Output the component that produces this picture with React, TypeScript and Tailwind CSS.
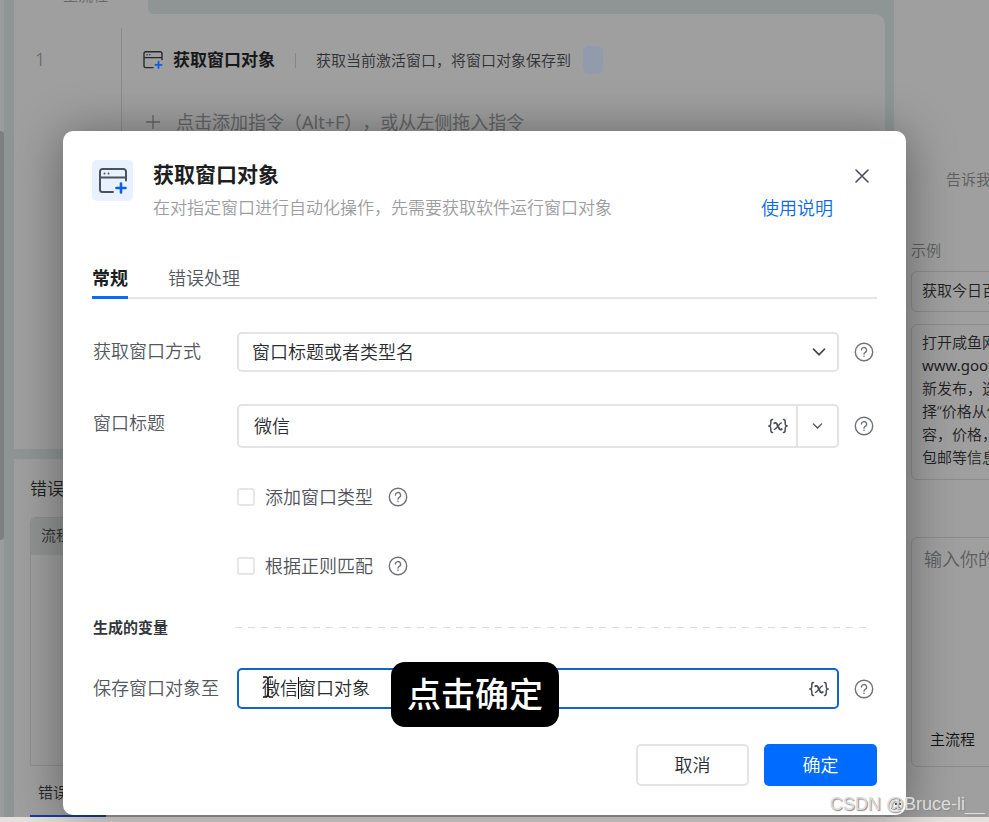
import React, { useState } from 'react';

const variableList = ['窗口标题或者类型名', '当前激活窗口'];

// Window outline with a blue plus in the lower right corner
function WindowAddIcon({ className }: { className?: string }) {
  return (
    <svg viewBox="0 0 28 26" fill="none" className={className} aria-hidden="true">
      <path
        d="M14 24H3.5A2.5 2.5 0 0 1 1 21.5v-18A2.5 2.5 0 0 1 3.500 1h21A2.500 2.500 0 0 1 27 3.500V12.500M1 9.500h26"
        stroke="currentColor"
        strokeWidth="2"
        strokeLinecap="round"
      />
      <circle cx="5.500" cy="5.500" r="1" fill="currentColor" />
      <circle cx="9.500" cy="5.500" r="1" fill="currentColor" />
      <path d="M22 15.500v9M17.500 20h9" stroke="#0a5fe6" strokeWidth="2.600" strokeLinecap="round" />
    </svg>
  );
}

function HelpIcon() {
  return (
    <button type="button" aria-label="帮助" className="shrink-0 cursor-pointer">
      <svg viewBox="0 0 20 20" fill="none" stroke="#6f7176" className="h-5 w-5">
        <circle cx="10" cy="10" r="8.700" strokeWidth="1.400" />
        <path
          d="M7.400 8.100a2.600 2.600 0 1 1 3.900 2.250c-.9.500-1.300.9-1.300 1.850"
          strokeWidth="1.300"
          strokeLinecap="round"
        />
        <circle cx="10" cy="14.300" r="0.800" fill="#6f7176" stroke="none" />
      </svg>
    </button>
  );
}

function ChevronIcon({ className }: { className?: string }) {
  return (
    <svg viewBox="0 0 14 8" fill="none" className={className} aria-hidden="true">
      <path d="M1.500 1.200 7 6.700l5.500-5.500" stroke="#4a4c50" strokeWidth="1.700" strokeLinecap="round" />
    </svg>
  );
}

function VariableButton() {
  return (
    <button type="button" aria-label="选择变量" className="shrink-0 cursor-pointer">
      <svg viewBox="0 0 20 16" fill="none" stroke="#4a4f5a" strokeLinecap="round" className="h-4 w-5">
        <path
          d="M4.500 1.500C2.800 1.500 2.800 2.500 2.800 4v1.800C2.800 7 2.300 7.700 1.200 8c1.100.3 1.600 1 1.600 2.200V12c0 1.500 0 2.500 1.700 2.500M15.500 1.500c1.700 0 1.700 1 1.700 2.500v1.800c0 1.200.5 1.900 1.600 2.200-1.100.3-1.600 1-1.600 2.200V12c0 1.500 0 2.500-1.700 2.500"
          strokeWidth="1.500"
        />
        <path d="M6.300 5.200c1.500-.8 2.300-.2 2.900 1.300l1.600 3.400c.6 1.500 1.500 2 2.900 1.200" strokeWidth="1.900" />
        <path d="M13.500 4.900C11.500 5 8.500 11.300 6.300 11.300" strokeWidth="1.300" />
      </svg>
    </button>
  );
}

function CheckRow({ id, label }: { id: string; label: string }) {
  return (
    <div className="flex h-7 items-center pl-[145px]">
      <input
        id={id}
        type="checkbox"
        className="h-[18px] w-[18px] appearance-none rounded-[3px] border-2 border-[#e6e6e8] bg-white checked:bg-[#0a6cff]"
      />
      <label htmlFor={id} className="mr-[15px] ml-[10px] text-[18px] leading-7 text-[#505359]">
        {label}
      </label>
      <HelpIcon />
    </div>
  );
}

function Workspace() {
  return (
    <div className="flex min-w-0 flex-1 flex-col">
      {/* Flow editor */}
      <section className="flex h-[449px] flex-col">
        <div className="flex h-[14px] overflow-hidden bg-[#9f9f9f]">
          <div className="w-[134px] shrink-0 pl-[49px] text-[15px] text-[#65676a]">
            <p className="-mt-[14px] leading-[18px]">主流程</p>
          </div>
          <div className="flex-1 rounded-bl-[6px] bg-[#8f9595]" />
        </div>
        <div className="flex flex-1 rounded-tr-[10px] bg-[#9f9f9f] pt-[14px]">
          <div className="w-[108px] shrink-0 border-r border-[#8b8b8c] pt-[19px] pl-[21px] text-[18px] leading-6 text-[#5f6163]">
            1
          </div>
          <div className="pl-[21px]">
            <div className="flex h-[64px] items-center whitespace-nowrap">
              <WindowAddIcon className="h-[18px] w-[20px] text-[#26292f]" />
              <h3 className="ml-[10px] text-[17px] leading-6 font-bold text-[#17181b]">获取窗口对象</h3>
              <span className="mx-5 h-[15px] w-px bg-[#858586]" />
              <p className="text-[15px] leading-6 text-[#303236]">获取当前激活窗口，将窗口对象保存到</p>
              <span className="ml-[12px] h-7 w-5 rounded-[6px] bg-[#929bab]" />
            </div>
            <div className="mt-[16px] flex h-7 items-center whitespace-nowrap text-[#636567]">
              <svg viewBox="0 0 14 14" className="mx-[3px] h-[14px] w-[14px]" stroke="currentColor" strokeWidth="1.300">
                <path d="M7 0v14M0 7h14" />
              </svg>
              <p className="ml-[13px] text-[18px] leading-7 font-normal [text-spacing-trim:space-all]">
                点击添加指令（Alt+F），或从左侧拖入指令
              </p>
            </div>
          </div>
        </div>
      </section>

      {/* Error list */}
      <section className="mt-[10px] flex flex-1 flex-col bg-[#9f9f9f] pl-4">
        <h3 className="mt-4 text-[17px] leading-7 text-[#1d1f21]">错误列表</h3>
        <div className="mt-[14px] mr-4 flex h-[249px] flex-col rounded-t-[6px] border border-[#8e8e8f]">
          <div className="flex h-[37px] shrink-0 items-center bg-[#929393] pb-1 pl-[10px] text-[15px] leading-6 text-[#2d2f31]">
            流程
          </div>
        </div>
        <div className="mt-[12px] flex flex-1 items-start">
          <button type="button" className="h-full w-[76px] border-b-2 border-[#123f96] pb-[9px] text-[15px] text-[#242628]">
            错误列表
          </button>
        </div>
      </section>
    </div>
  );
}

function AssistantPanel() {
  return (
    <aside className="flex w-[95px] shrink-0 flex-col overflow-hidden bg-[#9f9f9f] pl-[17px] text-[15px] whitespace-nowrap">
      <p className="mt-[167px] pl-[35px] leading-6 text-[#5c5e60]">告诉我你的需求</p>
      <p className="mt-[47px] leading-6 text-[#5c5e60]">示例</p>
      <div className="mt-[9px] w-[280px] rounded-[6px] border border-[#8c8c8d] px-[10px] pt-[5px] pb-[7px] leading-[27px] text-[#1f2123]">
        获取今日百
      </div>
      <div className="mt-3 w-[280px] rounded-[6px] border border-[#8c8c8d] px-[10px] pt-[6px] pb-[10px] leading-[23px] text-[#1f2123]">
        <p>打开咸鱼网</p>
        <p className="font-normal">www.goofish</p>
        <p>新发布，选</p>
        <p>择“价格从低</p>
        <p>容，价格，</p>
        <p>包邮等信息</p>
      </div>
      <div className="mt-[57px] flex h-[230px] w-[280px] flex-col justify-between rounded-[6px] border border-[#8c8c8d] px-3 pt-[7px] pb-[15px]">
        <p className="text-[18px] leading-7 text-[#5c5e60]">输入你的需求</p>
        <p className="pl-[6px] leading-6 text-[#0f1011]">主流程</p>
      </div>
    </aside>
  );
}

function WindowObjectDialog() {
  const [method, setMethod] = useState(variableList[0]);
  const [title, setTitle] = useState('微信');
  const [target, setTarget] = useState('微信窗口对象');

  return (
    <div
      role="dialog"
      aria-labelledby="dialog-title"
      className="relative w-full rounded-[10px] bg-white p-[29px] shadow-[0_4px_50px_rgba(0,0,0,0.4)]"
    >
      {/* Header */}
      <header className="flex items-start">
        <div className="flex h-[41px] w-[41px] items-center justify-center rounded-[5px] bg-[#e8f2ff]">
          <WindowAddIcon className="h-[26px] w-7 text-[#4b515e]" />
        </div>
        <div className="ml-5 flex-1">
          <div className="flex items-center justify-between">
            <h2 id="dialog-title" className="text-[21px] leading-7 font-bold text-[#1c1e22]">
              获取窗口对象
            </h2>
            <button type="button" aria-label="关闭" className="mt-1 mr-2 cursor-pointer">
              <svg viewBox="0 0 14 14" className="h-[14px] w-[14px]" stroke="#4a4f5e" strokeWidth="1.600" strokeLinecap="round">
                <path d="M1 1l12 12M13 1 1 13" />
              </svg>
            </button>
          </div>
          <div className="mt-[6px] flex items-center justify-between pr-11 leading-7">
            <p className="text-[17px] text-[#9b9da1]">在对指定窗口进行自动化操作，先需要获取软件运行窗口对象</p>
            <a href="#" className="text-[18px] text-[#0a6ae0]">
              使用说明
            </a>
          </div>
        </div>
      </header>

      {/* Tabs */}
      <div role="tablist" className="mt-[38px] flex h-[39px] gap-10 text-[18px] leading-7 shadow-[inset_0_-2px_0_#e5e6e7]">
        <button role="tab" aria-selected="true" type="button" className="border-b-3 border-[#0a6cff] font-bold text-[#1c1e22]">
          常规
        </button>
        <button role="tab" aria-selected="false" type="button" className="border-b-3 border-transparent text-[#55585e]">
          错误处理
        </button>
      </div>

      <form onSubmit={(e) => e.preventDefault()} className="mt-[33px] text-[18px] leading-7">
        <div className="flex items-center gap-[15px] pr-[3px]">
          <label htmlFor="method" className="w-[130px] shrink-0 pb-[2px] pl-px text-[#55585e]">
            获取窗口方式
          </label>
          <div className="relative flex-1">
            <select
              id="method"
              value={method}
              onChange={(e) => setMethod(e.target.value)}
              className="block h-10 w-full appearance-none rounded-[5px] border-2 border-[#e3e4e6] bg-white pl-[13px] text-[#2b2d31]"
            >
              {variableList.map((item) => (
                <option key={item}>{item}</option>
              ))}
            </select>
            <ChevronIcon className="pointer-events-none absolute top-4 right-[13px] h-2 w-[14px]" />
          </div>
          <HelpIcon />
        </div>

        <div className="mt-8 flex items-center gap-[15px] pr-[3px]">
          <label htmlFor="title" className="w-[130px] shrink-0 pb-[6px] pl-px text-[#55585e]">
            窗口标题
          </label>
          <div className="flex h-11 min-w-0 flex-1 items-center rounded-[5px] border-2 border-[#e3e4e6]">
            <input
              id="title"
              value={title}
              onChange={(e) => setTitle(e.target.value)}
              className="min-w-0 flex-1 pl-[15px] text-[#2b2d31] outline-none"
            />
            <VariableButton />
            <button
              type="button"
              aria-label="展开"
              className="ml-2 flex h-full w-[41px] items-center justify-center border-l-2 border-[#e3e4e6]"
            >
              <ChevronIcon className="h-[6px] w-[11px]" />
            </button>
          </div>
          <HelpIcon />
        </div>

        <div className="mt-[35px] flex flex-col gap-[41px]">
          <CheckRow id="add-type" label="添加窗口类型" />
          <CheckRow id="use-regex" label="根据正则匹配" />
        </div>

        {/* Output variables */}
        <div className="mt-[35px] flex h-6 items-center pr-[6px]">
          <h3 className="w-[143px] shrink-0 pl-px text-[15px] leading-6 font-bold text-[#33363b]">生成的变量</h3>
          <div className="h-px flex-1 bg-[repeating-linear-gradient(90deg,#dcdddf_0_7px,transparent_7px_13px)]" />
        </div>

        <div className="mt-[29px] flex items-center gap-[15px] pr-[3px]">
          <label htmlFor="target" className="w-[130px] shrink-0 pb-[2px] pl-px text-[#55585e]">
            保存窗口对象至
          </label>
          <div className="relative flex h-[41px] min-w-0 flex-1 items-center rounded-[5px] border-2 border-[#0f66c8] pr-2">
            <input
              id="target"
              value={target}
              onChange={(e) => setTarget(e.target.value)}
              className="min-w-0 flex-1 pb-[2px] pl-[23px] text-[#2b2d31] outline-none"
            />
            <VariableButton />
            {/* Text caret and mouse pointer */}
            <span className="absolute top-[7px] left-[59px] h-[22px] w-px bg-black" />
            <svg
              viewBox="0 0 12 22"
              fill="none"
              stroke="#111"
              strokeWidth="1.500"
              className="absolute top-[6px] left-[23px] h-[22px] w-3"
            >
              <path d="M1 1h3.500L6 2.500 7.500 1H11M6 2.500v17M1 21h3.500L6 19.500 7.500 21H11" />
            </svg>
            {/* Caption bubble */}
            <div className="absolute top-[-8px] left-[152px] rounded-[14px] bg-black px-4 text-[34px] leading-[65px] font-medium whitespace-nowrap text-white">
              点击确定
            </div>
          </div>
          <HelpIcon />
        </div>

        <div className="mt-[35px] flex justify-end gap-[15px]">
          <button type="button" className="h-[42px] w-[113px] rounded-[5px] border-2 border-[#e3e4e6] text-[#2b2d31]">
            取消
          </button>
          <button type="submit" className="h-[42px] w-[113px] rounded-[5px] bg-[#006cff] text-white">
            确定
          </button>
        </div>
      </form>

      {/* Resize grip */}
      <svg viewBox="0 0 12 12" fill="#4c4d50" className="absolute right-[3px] bottom-1 h-3 w-3" aria-hidden="true">
        <path d="M8 0h2v2H8zM4 4h2v2H4zM8 4h2v2H8zM0 8h2v2H0zM4 8h2v2H4zM8 8h2v2H8z" />
      </svg>
    </div>
  );
}

export default function App() {
  return (
    <div className="relative flex h-screen flex-col overflow-hidden bg-[#8f9595] font-['Noto_Sans','Noto_Sans_CJK_SC',sans-serif] font-[350]">
      <div className="flex min-h-0 flex-1">
        <div className="w-1 shrink-0 bg-[#9b9d9d] pt-[131px]">
          <div className="h-[409px] rounded-tr-[4px] rounded-br-[4px] bg-[#7d8080]" />
        </div>
        <div className="w-[10px] shrink-0" />
        <Workspace />
        <div className="w-[9px] shrink-0" />
        <AssistantPanel />
      </div>
      <div className="h-[5px] shrink-0 bg-[#e6e1df]" />

      <div className="absolute inset-0 pt-[131px] pr-[83px] pl-[63px]">
        <WindowObjectDialog />
      </div>

      <p className="absolute right-1 bottom-[6px] font-['Liberation_Sans',sans-serif] text-[18px] leading-6 font-normal text-[#dcdcdc] [text-shadow:1px_1px_1px_#888]">
        CSDN @Bruce-li__
      </p>
    </div>
  );
}
